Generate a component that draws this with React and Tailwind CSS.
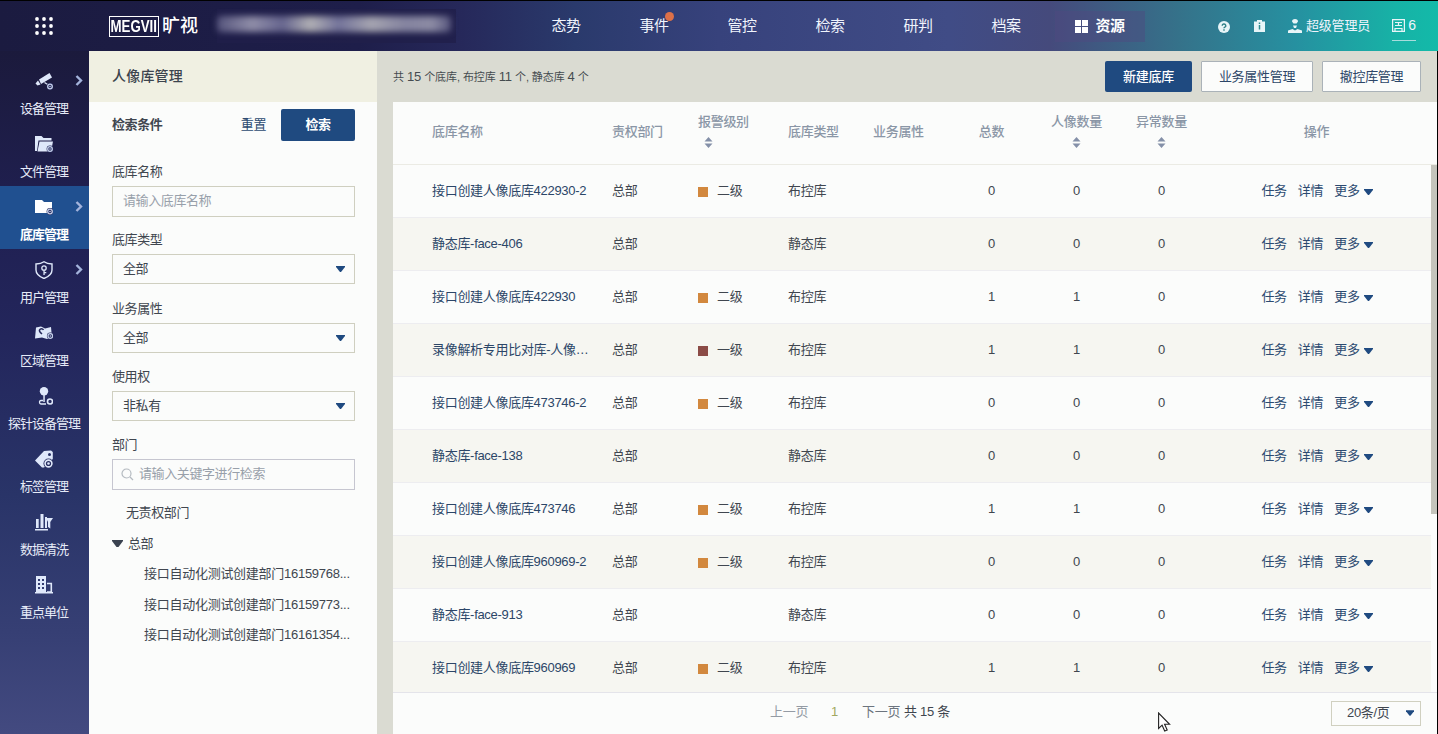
import React from "react";

const NAV = ["态势", "事件", "管控", "检索", "研判", "档案"];

const Gear = ({ x = 15, y = 14 }) => (
  <g>
    <circle cx={x} cy={y} r="3.4" fill="#25285a" />
    <circle cx={x} cy={y} r="2.3" fill="none" stroke="#c4cfea" strokeWidth="1.3" />
    <circle cx={x} cy={y} r="0.8" fill="#c4cfea" />
  </g>
);

const icons = {
  camera: (
    <>
      <path d="M4 7.500 14.500 1 17 5.500 6 12Z" />
      <path d="M3 8.500 5.500 12.500 2.500 13.500 .5 11.500Z" />
      <path d="M9.500 10.500l4 2.500" fill="none" stroke="#dfe8fa" strokeWidth="1.300" />
      <Gear x={15} y={14.5} />
    </>
  ),
  files: (
    <>
      <path d="M0 1h6.500l2 2h8v2.500H3.500L2 16H0Z" />
      <path d="M4.500 6.500H18L16 16.500H2.500Z" />
      <Gear x={15} y={14} />
    </>
  ),
  folder: (
    <>
      <path d="M0 2h7l2 2h8v11H0Z" fill="#fff" />
      <Gear x={15} y={13.5} />
    </>
  ),
  shield: (
    <>
      <path d="M9 .8Q12 3 17 3v6c0 4.500-3 6.500-8 8.500C4 15.500 1 13.500 1 9V3Q6 3 9 .8Z" fill="none" stroke="#dfe8fa" strokeWidth="1.400" />
      <circle cx="9" cy="7" r="2.200" fill="none" stroke="#dfe8fa" strokeWidth="1.300" />
      <path d="M8.400 9h1.300v5H8.400zM9.700 11h1.600v1.300H9.700z" />
    </>
  ),
  area: (
    <>
      <path d="M1 3.500 6 2.500l4 2 6-1.500L17 14l-5 1-5-1.500L0 14.500Z" />
      <path d="M7 10C4.800 8.200 4 7.200 4.500 6a2.200 2.200 0 0 1 4 0" fill="none" stroke="#25285a" strokeWidth="1.500" />
      <Gear x={15.3} y={12} />
    </>
  ),
  probe: (
    <>
      <circle cx="9" cy="4.200" r="4.200" />
      <path d="M8.300 8h1.500v7H8.300z" />
      <path d="M8 13.500H6q-1.500 0-1.500 1.700T6 17h5" fill="none" stroke="#dfe8fa" strokeWidth="1.300" />
      <circle cx="15" cy="14.500" r="2.500" fill="none" stroke="#dfe8fa" strokeWidth="1.600" />
    </>
  ),
  tag: (
    <>
      <path fillRule="evenodd" d="M0 10.500 9 1l7-.5 1.800 1.500V9L9 17.500H7ZM14.500 3a1.500 1.500 0 1 0 0 3 1.500 1.500 0 0 0 0-3Z" />
      <circle cx="13.500" cy="13.500" r="5" fill="#272d60" />
      <circle cx="13.500" cy="13.500" r="3.400" fill="none" stroke="#dfe8fa" strokeWidth="1.600" />
      <circle cx="13.500" cy="13.500" r="1.300" />
    </>
  ),
  data: (
    <>
      <path d="M1 6h2.700v9H1zM5.500 1h3v14h-3zM10 4h2v11h-2zM0 16h13v1.500H0z" />
      <path d="M11 5h7l-2.700 4v6.500L13 14V9Z" />
    </>
  ),
  building: (
    <>
      <path fillRule="evenodd" d="M1 0h10v16H1ZM3 3v2h2v-2Zm4 0v2h2v-2Zm-4 4v2h2v-2Zm4 0v2h2v-2Zm-4 4v2h2v-2Zm4 0v2h2v-2Z" />
      <path d="M12 7.500h4.300V16H12M0 16.700h18" fill="none" stroke="#dfe8fa" strokeWidth="1.600" />
    </>
  ),
};

const SIDE = [
  ["camera", "设备管理", true],
  ["files", "文件管理", false],
  ["folder", "底库管理", true],
  ["shield", "用户管理", true],
  ["area", "区域管理", false],
  ["probe", "探针设备管理", false],
  ["tag", "标签管理", false],
  ["data", "数据清洗", false],
  ["building", "重点单位", false],
];

const ROWS = [
  ["接口创建人像底库422930-2", 2, "布控库", 0, 0],
  ["静态库-face-406", 0, "静态库", 0, 0],
  ["接口创建人像底库422930", 2, "布控库", 1, 1],
  ["录像解析专用比对库-人像…", 1, "布控库", 1, 1],
  ["接口创建人像底库473746-2", 2, "布控库", 0, 0],
  ["静态库-face-138", 0, "静态库", 0, 0],
  ["接口创建人像底库473746", 2, "布控库", 1, 1],
  ["接口创建人像底库960969-2", 2, "布控库", 0, 0],
  ["静态库-face-913", 0, "静态库", 0, 0],
  ["接口创建人像底库960969", 2, "布控库", 1, 1],
];

const Caret = ({ className = "" }) => (
  <svg className={"shrink-0 " + className} width="9" height="6" viewBox="0 0 9 6">
    <path d="M0 0h9v1L5 6H4L0 1Z" fill="#1f4a80" />
  </svg>
);

const Sort = ({ className = "" }) => (
  <svg className={className} width="9" height="11" viewBox="0 0 9 11">
    <path d="M4.500 0 8.500 4.500H.5ZM.5 6.500h8L4.500 11Z" fill="#8490a8" />
  </svg>
);

const GRID = "grid grid-cols-[39px_180px_86px_90px_85px_76px_85px_85px_85px_227px]";

function Header() {
  return (
    <header className="flex h-[51px] shrink-0 items-center border-t border-black bg-[linear-gradient(90deg,#1b1b40_0%,#1e1e4a_25%,#26285a_32%,#2a3a6c_40%,#37427c_50%,#404c86_66%,#454a7c_73%,#35728a_82%,#2690a0_90%,#17b2a6_97%,#13baa9_100%)] text-[15px] text-[#f0f4fc]">
      <svg className="ml-[35px] shrink-0" width="18" height="18" viewBox="0 0 18 18" fill="#fff">
        {[2, 9, 16].map((y) => [2, 9, 16].map((x) => <circle key={x + "-" + y} cx={x} cy={y} r="1.900" />))}
      </svg>
      <div className="ml-14 flex w-[90px] shrink-0 items-center text-white">
        <div className="flex h-[21px] w-[50px] shrink-0 items-center justify-center border border-white">
          <span className="inline-block scale-x-[0.78] text-[17px] leading-none font-bold">MEGVII</span>
        </div>
        <span className="ml-[3px] text-[18px] leading-none font-medium whitespace-nowrap">旷视</span>
      </div>
      <div className="ml-[18px] flex h-[34px] w-[239px] shrink-0 items-center bg-[#201f4a]/80">
        <div className="mb-1 h-[16px] w-[234px] rounded-sm bg-[linear-gradient(90deg,#55547c,#8f8da8_15%,#66658e_28%,#b0afb4_40%,#73739a_52%,#a5a4b0_66%,#8584a0_80%,#8c8ba4_92%,#55547c)] blur-[3px]" />
      </div>
      <nav className="ml-[66px] flex shrink-0">
        {NAV.map((n) => (
          <div key={n} className="relative w-[88px] text-center">
            <span className="tracking-[-0.5px]">{n}</span>
            {n === "事件" && <i className="absolute top-[-3px] right-[24px] size-[9px] rounded-full bg-[#dc7048]" />}
          </div>
        ))}
      </nav>
      <div className="ml-[5px] flex h-[31px] w-[90px] shrink-0 items-center justify-center gap-[7px] bg-[#4f4a80]/45 font-bold tracking-[-0.5px] text-white">
        <svg width="13" height="13" viewBox="0 0 13 13" fill="#fff">
          <path d="M0 0h6v6H0zM7 0h6v6H7zM0 7h6v6H0zM7 7h6v6H7z" />
        </svg>
        资源
      </div>
      <svg className="mt-px ml-[73px] shrink-0" width="12" height="12" viewBox="0 0 12 12">
        <circle cx="6" cy="6" r="6" fill="#e8f5f8" />
        <path d="M4.200 4.700a1.800 1.700 0 1 1 2.600 1.500q-.8.400-.8 1M6 8.300v1.400" fill="none" stroke="#2f8088" strokeWidth="1.400" />
      </svg>
      <svg className="ml-6 shrink-0" width="11" height="12" viewBox="0 0 11 12">
        <path d="M0 1.500h3V0h5v1.500h3V12H0Z" fill="#e8f5f8" />
        <path d="M5.500 2.500v1.400M5.500 5v4.500" stroke="#2f8c90" strokeWidth="1.500" />
      </svg>
      <svg className="ml-[23px] shrink-0" width="14" height="14" viewBox="0 0 14 14" fill="#e8f5f8">
        <path d="M4 2.500Q4 0 7 0t3 2.500L8.500 4.500h-3ZM5 6.500h4L8 9H6ZM0 14v-2.500L4.500 10 7 11.500 9.500 10l4.500 1.500V14Z" />
      </svg>
      <span className="mb-px ml-1 w-[64px] shrink-0 text-[13px] tracking-[-0.2px] whitespace-nowrap">超级管理员</span>
      <div className="ml-[22px] flex h-[29px] w-6 shrink-0 items-center justify-between border-b border-[#a8dcdc]">
        <svg width="13" height="13" viewBox="0 0 13 13" fill="none" stroke="#e8f5f8" strokeWidth="1.200">
          <path d="M.6 13V.600h11.800V13M3 3.500h7M3 6.500h7M6.500 3.500v3M3 12V9.500h7V12M0 12.400h13" />
        </svg>
        <span className="text-[14px]">6</span>
      </div>
    </header>
  );
}

function Sidebar() {
  return (
    <aside className="flex w-[89px] shrink-0 flex-col bg-[linear-gradient(180deg,#1b1a3c_0%,#202052_25%,#23265c_42%,#293468_65%,#363f74_85%,#434a80_100%)] pt-[9px] text-[#e6ebf8]">
      {SIDE.map(([k, t, arrow]) => (
        <div
          key={t}
          className={
            "relative flex h-[63px] shrink-0 flex-col items-center pt-[12px] pr-px " +
            (k === "folder" ? "bg-[#205090] font-bold text-white" : "")
          }
        >
          <svg width="18" height="18" viewBox="0 0 18 18" fill="#dfe8fa">
            {icons[k]}
          </svg>
          <span className="mt-[9px] text-[13px] leading-[20px] tracking-[-1px] whitespace-nowrap">{t}</span>
          {arrow && (
            <svg className="absolute top-[15px] right-[6px]" width="8" height="11" viewBox="0 0 8 11">
              <path d="m1.500 1 4.500 4.500L1.500 10" fill="none" stroke="#a4b4dc" strokeWidth="2.400" />
            </svg>
          )}
        </div>
      ))}
    </aside>
  );
}

const Field = ({ label, value }) => (
  <div className="h-[68.500px]">
    <div className="h-[22px] text-[13px] leading-[16px]">{label}</div>
    <div className="flex h-[30px] items-center justify-between border border-[#cfcfc0] pr-[9px] pl-[10px]">
      <span>{value}</span>
      <Caret />
    </div>
  </div>
);

function Filter() {
  return (
    <section className="flex w-[288px] shrink-0 flex-col bg-[#fbfcfb] text-[13px] tracking-[-0.4px] text-[#40464f]">
      <div className="flex h-[51px] shrink-0 items-center bg-[#f0f0e2] pl-[23px] text-[14px] font-medium tracking-[0.2px] text-[#3c444e]">人像库管理</div>
      <div className="flex flex-col pr-[22px] pl-[23px]">
        <div className="flex h-[46px] items-center">
          <span className="flex-1 font-bold">检索条件</span>
          <span className="mr-[15px] text-[#2c4a70]">重置</span>
          <button className="h-[32px] w-[74px] rounded-[2px] bg-[#1f4a80] font-bold text-white">检索</button>
        </div>
        <div className="mt-4 h-[68px]">
          <div className="h-[22px] leading-[16px]">底库名称</div>
          <div className="flex h-[31px] items-center border border-[#cfcfc0] pb-[2px] pl-[10px] text-[#98a0aa]">请输入底库名称</div>
        </div>
        <Field label="底库类型" value="全部" />
        <Field label="业务属性" value="全部" />
        <Field label="使用权" value="非私有" />
        <div className="-mt-px leading-[16px]">部门</div>
        <div className="mt-[6px] flex h-[31px] items-center border border-[#c6c6d0] pl-[8px] text-[#98a0aa]">
          <svg className="mr-[5px]" width="13" height="13" viewBox="0 0 13 13" fill="none" stroke="#b4bac0" strokeWidth="1.200">
            <circle cx="5.500" cy="5.500" r="4.500" />
            <path d="m9 9 3 3" />
          </svg>
          请输入关键字进行检索
        </div>
        <div className="mt-[15px] pl-[14px] leading-[16px]">无责权部门</div>
        <div className="mt-[15px] flex items-center leading-[16px]">
          <svg className="mr-[5px]" width="11" height="8" viewBox="0 0 11 8">
            <path d="M0 0h11v1L6.500 7h-2L0 1Z" fill="#3a4250" />
          </svg>
          总部
        </div>
        {["16159768", "16159773", "16161354"].map((n) => (
          <div key={n} className="mt-[14.500px] pl-[32px] leading-[16px] tracking-[-0.27px] whitespace-nowrap">
            接口自动化测试创建部门{n}...
          </div>
        ))}
      </div>
    </section>
  );
}

function Table() {
  return (
    <div className="flex min-h-0 flex-1 flex-col bg-[#fbfcfb] text-[13px] tracking-[-0.3px] text-[#40464f]">
      <div className={GRID + " h-[63px] shrink-0 items-center border-b border-[#ebebe4] pb-[2px] font-medium text-[#8a96a6]"}>
        <i />
        <span>底库名称</span>
        <span>责权部门</span>
        <div className="-mt-1">
          <div className="leading-[20px]">报警级别</div>
          <Sort className="mt-[5px] ml-[6px]" />
        </div>
        <span>底库类型</span>
        <span>业务属性</span>
        <span className="text-center">总数</span>
        <div className="-mt-1 flex flex-col items-center">
          <div className="leading-[20px]">人像数量</div>
          <Sort className="mt-[5px]" />
        </div>
        <div className="-mt-1 flex flex-col items-center">
          <div className="leading-[20px]">异常数量</div>
          <Sort className="mt-[5px]" />
        </div>
        <span className="pr-[2px] text-center">操作</span>
      </div>
      <div className="flex h-[527px] shrink-0 overflow-hidden">
        <div className="w-[1038px] shrink-0">
          {ROWS.map(([name, level, type, a, b], i) => (
            <div
              key={name}
              className={GRID + " h-[53px] items-center border-b border-[#ededf0] pb-px " + (i % 2 ? "bg-[#f6f6f1]" : "")}
            >
              <i />
              <span className="whitespace-nowrap text-[#2c4668]">{name}</span>
              <span>总部</span>
              <span className="flex items-center">
                {level > 0 && (
                  <>
                    <i className={"mt-[2px] mr-[9px] size-[10px] " + (level === 2 ? "bg-[#d2883e]" : "bg-[#8b4b46]")} />
                    {level === 2 ? "二级" : "一级"}
                  </>
                )}
              </span>
              <span>{type}</span>
              <i />
              <span className="text-center">{a}</span>
              <span className="text-center">{b}</span>
              <span className="text-center">0</span>
              <span className="flex items-center justify-center pr-px text-[#2c4a70]">
                <span className="mr-[11px]">任务</span>
                <span className="mr-[11px]">详情</span>
                <span className="mr-[4px]">更多</span>
                <Caret className="mt-[3px]" />
              </span>
            </div>
          ))}
        </div>
        <div className="w-[6px] shrink-0">
          <div className="h-[349px] bg-[#c4c4bc]" />
        </div>
      </div>
      <div className="flex flex-1 items-center border-t border-[#e4e4ea] pr-[16px] pl-[377px]">
        <span className="mb-[4px] w-[61px] text-[#949ba4]">上一页</span>
        <span className="mb-[4px] w-[31px] text-[#a0a860]">1</span>
        <span className="mb-[4px] w-[42px] text-[#6c747e]">下一页</span>
        <span className="mb-[4px] flex-1">共 15 条</span>
        <div className="mb-px flex h-[25px] w-[90px] items-center justify-between border border-[#d0d0c0] pr-[6px] pl-[15px]">
          20条/页
          <Caret className="h-[6px] w-[8px]" />
        </div>
      </div>
    </div>
  );
}

export default function App() {
  return (
    <div className="relative flex h-[734px] w-[1438px] flex-col overflow-hidden bg-[#dadbd2] font-['Liberation_Sans','Noto_Sans_CJK_SC',sans-serif]">
      <Header />
      <div className="flex min-h-0 flex-1">
        <Sidebar />
        <Filter />
        <main className="flex min-w-0 flex-1 flex-col border-r border-black pl-[16px]">
          <div className="flex h-[51px] shrink-0 items-center pr-[16px] text-[13px] tracking-[-0.3px] text-[#2c4668]">
            <span className="flex-1 text-[11px] tracking-[-0.08px] text-[#454b50]">
              共 <b className="text-[13px] font-normal">15</b> 个底库, 布控库 <b className="text-[13px] font-normal">11</b> 个, 静态库{" "}
              <b className="text-[13px] font-normal">4</b> 个
            </span>
            <button className="h-[31px] w-[87px] rounded-[2px] bg-[#1f4a80] font-medium text-white">新建底库</button>
            <button className="ml-[9px] h-[31px] w-[112px] rounded-[1px] border border-[#aab2b8] bg-[#fbfcfb]">业务属性管理</button>
            <button className="ml-[9px] h-[31px] w-[99px] rounded-[1px] border border-[#aab2b8] bg-[#fbfcfb]">撤控库管理</button>
          </div>
          <Table />
        </main>
      </div>
      <svg className="absolute top-[712px] left-[1158px]" width="13" height="20" viewBox="0 0 13 20">
        <path d="M.6 1v15.500l3.500-3.300 2.600 5.800 2.500-1.100-2.600-5.600h5Z" fill="#fff" stroke="#222" strokeWidth="1.100" />
      </svg>
    </div>
  );
}
